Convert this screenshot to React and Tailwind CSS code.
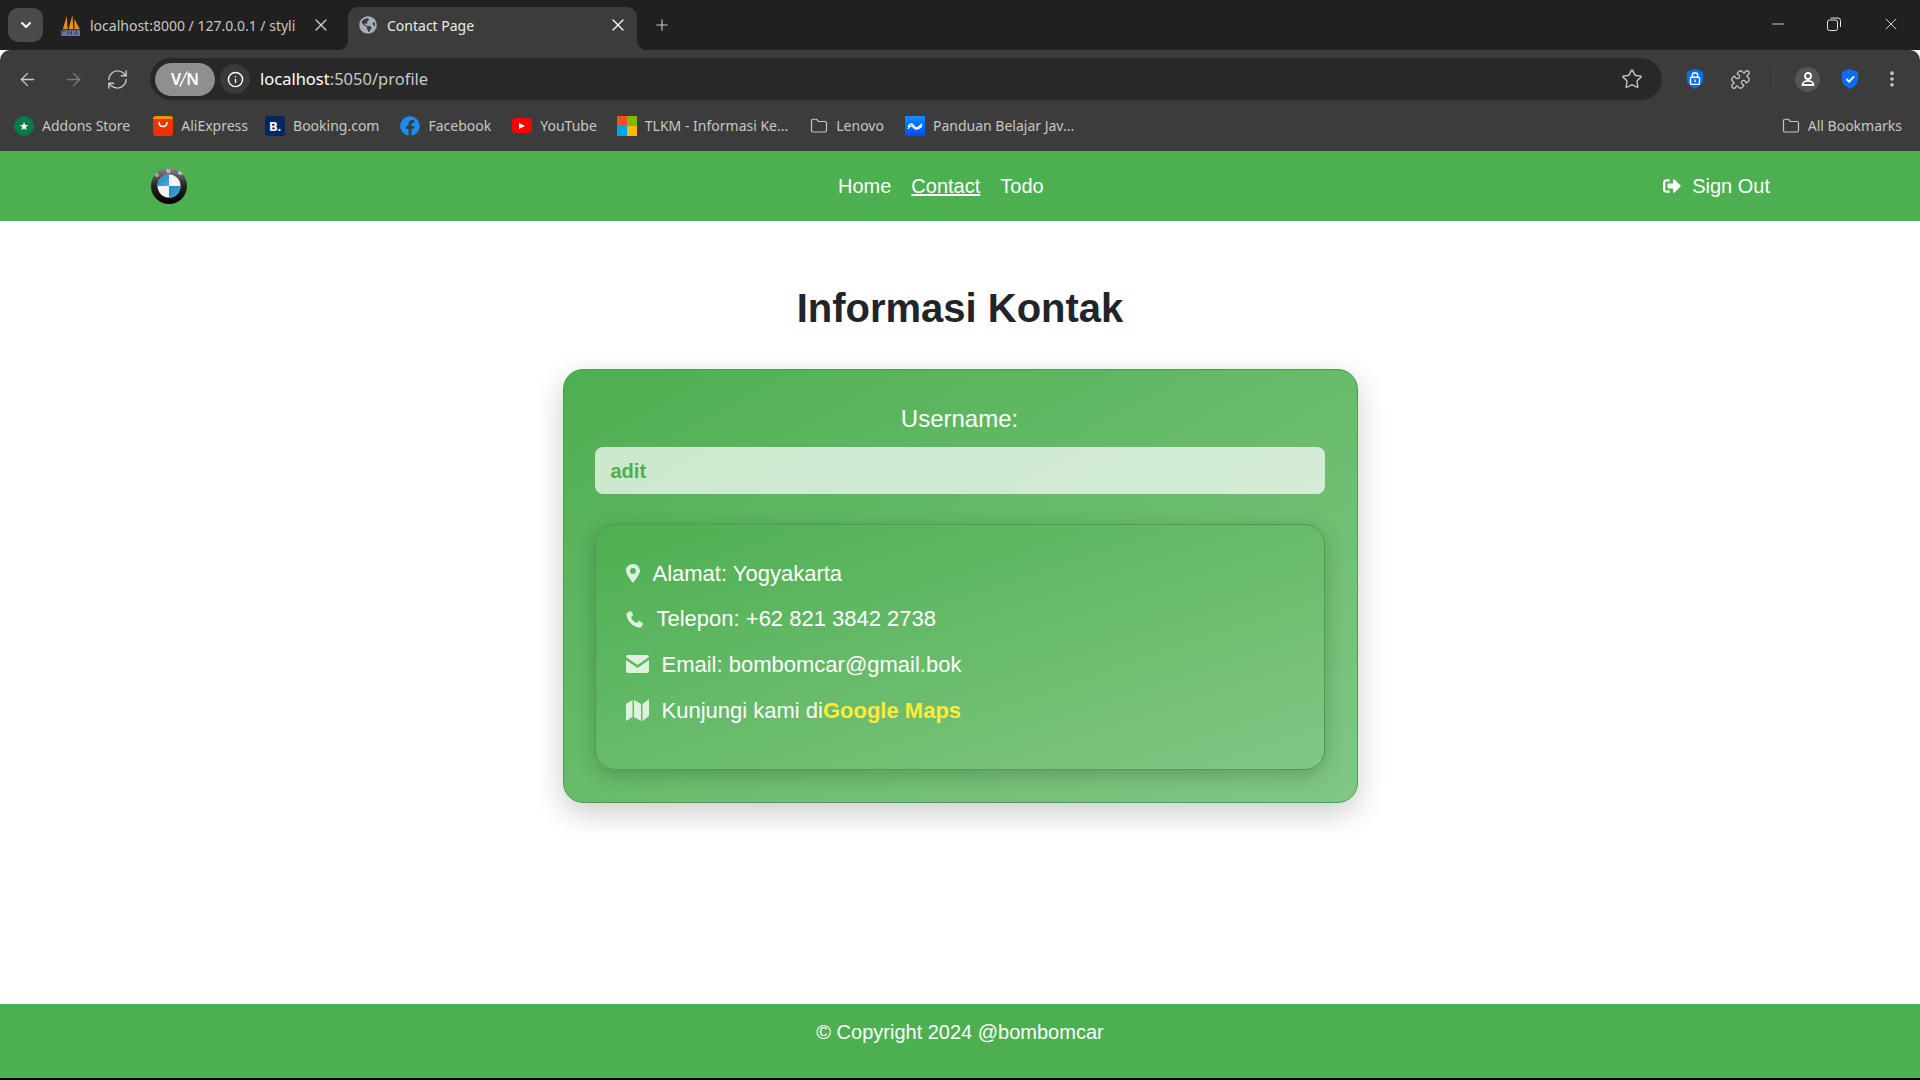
import { ArrowLeft, ArrowRight, RefreshCw, Info, Star, Puzzle, X, Plus, ChevronDown, Minus, MoreVertical, Folder } from 'lucide-react'
import { FaSignOutAlt, FaFacebook, FaGlobeAmericas } from 'react-icons/fa'

function PmaIcon() {
  return (
    <svg viewBox="0 0 22 24" className="w-[21px] h-[23px] shrink-0">
      <path d="M3 16 L7 2 L8 16 Z" fill="#f29111" />
      <path d="M9 16 L13 1 L14 16 Z" fill="#f29111" />
      <path d="M15 16 L15 5 L21 16 Z" fill="#e8890c" />
      <rect x="1" y="17" width="20" height="6" fill="#6c78a8" />
      <path d="M2 22v-4h3M8 22v-4l2 2 2-2v4M15 22l2-4 2 4" stroke="#2e3a63" strokeWidth="1" fill="none" />
    </svg>
  )
}

function ShieldIcon({ lock }) {
  return (
    <svg viewBox="0 0 20 22" className="w-[18px] h-5">
      <path d="M10 0 L19 3 V11 C19 16 15 19.5 10 22 C5 19.5 1 16 1 11 V3 Z" fill="#0b6cf5" />
      {lock ? (
        <>
          <rect x="5" y="9" width="10" height="8" rx="1" fill="none" stroke="#fff" strokeWidth="1.6" />
          <path d="M7 9V7a3 3 0 0 1 6 0v2" fill="none" stroke="#fff" strokeWidth="1.6" />
          <rect x="9.3" y="11.5" width="1.4" height="3" fill="#fff" />
        </>
      ) : (
        <path d="M6 11 L9 14 L14.5 8" fill="none" stroke="#fff" strokeWidth="2" />
      )}
    </svg>
  )
}

function BmwLogo() {
  return (
    <svg viewBox="0 0 36 36" className="w-9 h-9">
      <defs>
        <linearGradient id="ring" x1="0" y1="0" x2="0" y2="1">
          <stop offset="0" stopColor="#888" />
          <stop offset="0.45" stopColor="#2a2a2a" />
          <stop offset="1" stopColor="#000" />
        </linearGradient>
        <linearGradient id="blue" x1="0" y1="0" x2="1" y2="1">
          <stop offset="0" stopColor="#1d86c4" />
          <stop offset="1" stopColor="#4aa8d8" />
        </linearGradient>
      </defs>
      <circle cx="18" cy="18" r="18" fill="url(#ring)" />
      <circle cx="18" cy="18" r="11.5" fill="#f2f2f2" />
      <path d="M18 18 V6.5 A11.5 11.5 0 0 0 6.5 18 Z" fill="url(#blue)" />
      <path d="M18 18 V29.5 A11.5 11.5 0 0 0 29.5 18 Z" fill="url(#blue)" />
      <text x="5.5" y="9.5" fontSize="5" fontWeight="700" fill="#ddd" transform="rotate(-38 5.5 9.5)">B</text>
      <text x="15.2" y="5.2" fontSize="5" fontWeight="700" fill="#ddd">M</text>
      <text x="26" y="5" fontSize="5" fontWeight="700" fill="#ddd" transform="rotate(38 26 5)">W</text>
    </svg>
  )
}

function TlkmIcon() {
  return (
    <div className="grid grid-cols-2 w-5 h-5 shrink-0">
      <span className="bg-[#f25022]" />
      <span className="bg-[#7fba00]" />
      <span className="bg-[#00a4ef]" />
      <span className="bg-[#ffb900]" />
    </div>
  )
}

const bookmarks = [
  { name: 'Addons Store', gap: 'ml-[14px]', icon: (
    <div className="w-5 h-5 rounded-full bg-[#0b7a4b] text-white text-[11px] leading-5 text-center shrink-0">★</div>
  ) },
  { name: 'AliExpress', gap: 'ml-[23px]', icon: (
    <div className="w-5 h-5 rounded-[3px] bg-[#ee3300] border-t-[3px] border-[#ff9000] flex justify-center shrink-0">
      <svg viewBox="0 0 12 8" className="w-3 h-2 mt-[2px]"><path d="M2 1 C2 7 10 7 10 1" stroke="#fff" strokeWidth="1.6" fill="none" /></svg>
    </div>
  ) },
  { name: 'Booking.com', gap: 'ml-[17px]', icon: (
    <div className="w-5 h-5 rounded-[3px] bg-[#04265f] text-white text-[13px] font-bold leading-5 text-center shrink-0">B.</div>
  ) },
  { name: 'Facebook', gap: 'ml-[21px]', icon: <FaFacebook className="w-5 h-5 text-[#1a8cf5] shrink-0" /> },
  { name: 'YouTube', gap: 'ml-[21px]', icon: (
    <div className="w-5 h-[15px] rounded-[4px] bg-[#f00] flex items-center justify-center shrink-0">
      <div className="w-0 h-0 border-y-[3.5px] border-y-transparent border-l-[6px] border-l-white" />
    </div>
  ) },
  { name: 'TLKM - Informasi Ke...', gap: 'ml-[20px]', icon: <TlkmIcon /> },
  { name: 'Lenovo', gap: 'ml-[22px]', icon: <Folder className="w-[18px] h-[18px] text-[#c4c7c5] shrink-0" strokeWidth={1.6} /> },
  { name: 'Panduan Belajar Jav...', gap: 'ml-[21px]', icon: (
    <div className="w-5 h-5 bg-gradient-to-b from-[#1a8cff] to-[#0048ff] flex items-center justify-center shrink-0">
      <svg viewBox="0 0 16 8" className="w-4 h-2"><path d="M1 5 C3 1 5 1 7 4 C9 7 11 6 15 2 M1 7 C3 3 5 3 7 6 C9 8 12 7 15 4" stroke="#fff" strokeWidth="1.3" fill="none" /></svg>
    </div>
  ) },
]

function BrowserChrome() {
  return (
    <div className="font-['Noto_Sans',sans-serif] shrink-0">
      {/* tab strip */}
      <div className="h-[50px] bg-[#202020] flex items-end pl-2">
        <div className="w-[35px] h-[34px] mb-2 rounded-[10px] bg-[#4a4a4a] flex items-center justify-center">
          <ChevronDown className="w-4 h-4 text-white" strokeWidth={3} />
        </div>
        <div className="w-[305px] h-[43px] flex items-center pl-[17px] pb-[7px]">
          <PmaIcon />
          <span className="ml-[9px] w-[221px] text-[14px] text-[#c7c7c7] whitespace-nowrap">localhost:8000 / 127.0.0.1 / styli</span>
          <X className="w-5 h-5 text-[#d0d0d0]" strokeWidth={1.5} />
        </div>
        {/* active tab */}
        <div className="relative w-[289px] h-[43px] rounded-t-[10px] bg-[#3c3c3c] flex items-center pl-[11px] pb-[7px]">
          <span className="absolute left-[-10px] bottom-0 w-[10px] h-[10px] bg-[radial-gradient(circle_at_0_0,#202020_10px,#3c3c3c_10.5px)]" />
          <span className="absolute right-[-10px] bottom-0 w-[10px] h-[10px] bg-[radial-gradient(circle_at_100%_0,#202020_10px,#3c3c3c_10.5px)]" />
          <FaGlobeAmericas className="w-[18px] h-[18px] text-[#a6adb4]" />
          <span className="ml-[10px] text-[14px] text-[#eaeaea] w-[221px]">Contact Page</span>
          <X className="w-5 h-5 text-white" strokeWidth={1.5} />
        </div>
        <Plus className="ml-4 mb-4 w-[18px] h-[18px] text-[#c7c7c7]" strokeWidth={1.5} />
        <div className="ml-auto flex items-center h-[50px] pb-[3px] pr-[19px] text-[#e6e6e6]">
          <Minus className="w-[18px] h-[18px]" strokeWidth={1.2} />
          <svg viewBox="0 0 14 14" className="ml-[40px] w-[14px] h-[14px]" fill="none" stroke="currentColor" strokeWidth="1">
            <rect x="0.5" y="3" width="10" height="10.5" rx="2" />
            <path d="M3.5 1 H11 A2.5 2.5 0 0 1 13.5 3.5 V10" />
          </svg>
          <X className="ml-[40px] w-[20px] h-[20px]" strokeWidth={1.1} />
        </div>
      </div>

      {/* toolbar */}
      <div className="h-[50px] bg-[#3c3c3c] rounded-t-[10px] flex items-center pt-2">
        <ArrowLeft className="ml-[17px] w-[21px] h-[21px] text-[#c7c7c7]" strokeWidth={1.5} />
        <ArrowRight className="ml-[25px] w-[21px] h-[21px] text-[#7b7b7b]" strokeWidth={1.5} />
        <RefreshCw className="ml-[22px] w-[23px] h-[23px] text-[#c7c7c7]" strokeWidth={1.5} />
        <div className="ml-[21px] w-[1512px] h-[42px] rounded-full bg-[#282828] flex items-center pl-[5px]">
          <div className="w-[60px] h-[33px] rounded-full bg-[#8f8f8f] text-white text-[16px] font-semibold flex items-center justify-center">
            V
            <svg viewBox="0 0 12 22" className="w-[9px] h-[20px] mx-[-2px]"><path d="M11 1 L1 21" stroke="#fff" strokeWidth="1.8" /></svg>
            N
          </div>
          <div className="ml-[5px] w-[30px] h-[30px] rounded-full bg-[#3a3a3a] flex items-center justify-center">
            <Info className="w-[17px] h-[17px] text-white" strokeWidth={2} />
          </div>
          <span className="ml-[10px] text-[16.5px] text-white">localhost<span className="text-[#c7c7c7]">:5050/profile</span></span>
          <Star className="ml-auto mr-[19px] w-[22px] h-[22px] text-[#c7c7c7]" strokeWidth={1.5} />
        </div>
        <div className="ml-6 flex items-center">
          <ShieldIcon lock />
          <Puzzle className="ml-[26px] w-[21px] h-[21px] text-[#c7c7c7]" strokeWidth={1.5} />
          <div className="ml-[22px] w-px h-5 bg-[#484848]" />
          <div className="ml-[21px] w-[25px] h-[25px] rounded-full bg-[#555] flex items-center justify-center">
            <svg viewBox="0 0 14 16" className="w-[14px] h-4" fill="none" stroke="#fff" strokeWidth="1.8">
              <circle cx="7" cy="5" r="3" />
              <path d="M1.5 14 C1.5 8.5 12.5 8.5 12.5 14 Z" />
            </svg>
          </div>
          <div className="ml-[21px]"><ShieldIcon /></div>
          <MoreVertical className="ml-[23px] w-5 h-5 text-[#c7c7c7]" strokeWidth={2.4} />
        </div>
      </div>

      {/* bookmarks */}
      <div className="h-[51px] bg-[#3c3c3c] flex items-center text-[14px] text-[#c7c7c7]">
        {bookmarks.map((b) => (
          <div key={b.name} className={`flex items-center gap-2 ${b.gap}`}>
            {b.icon}
            <span className="whitespace-nowrap">{b.name}</span>
          </div>
        ))}
        <div className="ml-auto pr-[18px] flex items-center gap-2">
          <Folder className="w-[18px] h-[18px] text-[#c4c7c5]" strokeWidth={1.6} />
          <span>All Bookmarks</span>
        </div>
      </div>
    </div>
  )
}

const MarkerIcon = () => (
  <svg viewBox="0 0 14 19" className="w-[14px] h-[19px] fill-white/80">
    <path fillRule="evenodd" d="M7 0 C3 0 0 3 0 6.8 C0 10 4.5 16 7 19 C9.5 16 14 10 14 6.8 C14 3 11 0 7 0 Z M7 4 A2.9 2.9 0 1 1 7 9.8 A2.9 2.9 0 1 1 7 4 Z" />
  </svg>
)

const PhoneIcon = () => (
  <svg viewBox="0 0 18 18" className="w-[18px] h-[18px] fill-white/80">
    <path d="M1 3 L4 1 C4.6 .7 5 1 5.3 1.5 L7 4.5 C7.2 5 7 5.4 6.6 5.7 L5 7.2 C6 10 8 12 10.7 13 L12.2 11.4 C12.6 11 13 10.9 13.5 11.1 L16.6 13 C17 13.3 17.2 13.8 17 14.2 L15.2 17 C14.8 17.6 14.3 17.8 13.6 17.7 C7 17 1 11 .4 4.4 C.3 3.8 .5 3.4 1 3 Z" />
  </svg>
)

const EnvelopeIcon = () => (
  <svg viewBox="0 0 23 18" className="w-[23px] h-[18px] fill-white/80">
    <path d="M2 0 H21 A2 2 0 0 1 23 2 L11.5 10 L0 2 A2 2 0 0 1 2 0 Z" />
    <path d="M0 5 L11.5 13 L23 5 V16 A2 2 0 0 1 21 18 H2 A2 2 0 0 1 0 16 Z" />
  </svg>
)

const MapIcon = () => (
  <svg viewBox="0 0 23 22" className="w-[23px] h-[22px] fill-white/80">
    <path d="M0 5 L6.5 1 V18 L0 22 Z" />
    <path d="M8 1 L15 5 V22 L8 18 Z" />
    <path d="M16.5 5 L23 0 V17 L16.5 22 Z" />
  </svg>
)

export default function App() {
  const rows = [
    { icon: <MarkerIcon />, text: 'Alamat: Yogyakarta' },
    { icon: <PhoneIcon />, text: 'Telepon: +62 821 3842 2738' },
    { icon: <EnvelopeIcon />, text: 'Email: bombomcar@gmail.bok' },
  ]

  return (
    <div className="h-[1080px] flex flex-col overflow-hidden bg-white font-['Liberation_Sans',Arial,sans-serif]">
      <BrowserChrome />

      <nav className="h-[70px] shrink-0 bg-[#4caf50] flex items-center pl-[151px] pr-[150px] text-white text-[20px]">
        <BmwLogo />
        <div className="ml-[651px] flex gap-5">
          <a>Home</a>
          <a className="underline">Contact</a>
          <a>Todo</a>
        </div>
        <a className="ml-auto flex items-center">
          <FaSignOutAlt className="w-[18px] h-[18px]" />
          <span className="ml-[11px]">Sign Out</span>
        </a>
      </nav>

      <main className="flex-1 pt-[63px]">
        <h1 className="text-[40px] leading-[48px] font-bold text-center text-[#212529] mb-[37px]">Informasi Kontak</h1>

        <div className="w-[795px] mx-auto rounded-[20px] border border-[#4a9e4e] bg-gradient-to-br from-[#4caf50] to-[#81c784] pl-[31px] pr-[32px] pt-[35px] pb-[32px] shadow-[0_10px_30px_rgba(0,0,0,0.2)] text-white">
          <div className="text-[24px] leading-7 text-center mb-[14px]">Username:</div>
          <div className="h-[47px] rounded-lg bg-white/70 flex items-center px-4 text-[20px] font-bold text-[#4caf50]">adit</div>

          <div className="mt-[30px] h-[246px] rounded-[20px] border border-[#4a9e4e] bg-gradient-to-br from-[#4caf50] to-[#81c784] px-[30px] pt-[35px] shadow-[0_5px_20px_rgba(0,0,0,0.2)] text-[22px]">
            {rows.map((r) => (
              <div key={r.text} className="h-[26px] mb-[19.7px] flex items-center">
                {r.icon}
                <span className="ml-[13px]">{r.text}</span>
              </div>
            ))}
            <div className="h-[26px] flex items-center">
              <MapIcon />
              <span className="ml-[13px]">Kunjungi kami di</span>
              <a className="font-bold text-[#ffeb3b]">Google Maps</a>
            </div>
          </div>
        </div>
      </main>

      <footer className="h-[74px] shrink-0 bg-[#4caf50] pt-4 text-center text-[20px] leading-6 text-white">
        © Copyright 2024 @bombomcar
      </footer>
      <div className="h-[2px] shrink-0 bg-black" />
    </div>
  )
}
